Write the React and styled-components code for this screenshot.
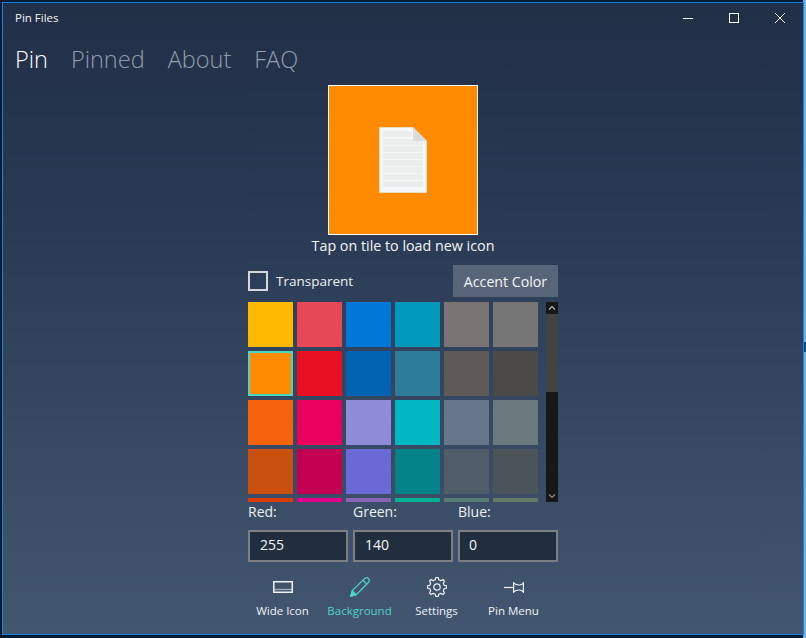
import React from "react";
import styled, { createGlobalStyle } from "styled-components";

const Global = createGlobalStyle`
  html, body { margin: 0; padding: 0; width: 806px; height: 638px; overflow: hidden; }
  body { font-family: "Open Sans", "Noto Sans", "Liberation Sans", sans-serif; }
  * { box-sizing: border-box; }
`;

const Desktop = styled.div`
  width: 806px;
  height: 638px;
  padding: 2px;
  background:
    linear-gradient(#0b4f8a, #0b4f8a) right 342px / 3px 10px no-repeat,
    linear-gradient(#6fb2e2, #6fb2e2) right top / 3px 638px no-repeat,
    #071c33;
`;

const Window = styled.div`
  width: 802px;
  height: 633px;
  border: 1px solid #1683de;
  background: linear-gradient(180deg, #212f47 0%, #2a3a54 35%, #435670 100%);
  color: #fff;
  display: flex;
  flex-direction: column;
`;

const TitleBar = styled.div`
  height: 29px;
  flex: none;
  display: flex;
  align-items: center;
  justify-content: space-between;
  padding-left: 12px;
`;

const Title = styled.span`
  font-size: 11.5px;
  color: #f2f4f6;
`;

const WinControls = styled.div`
  display: flex;
  height: 29px;
`;

const WinButton = styled.div`
  width: 46px;
  height: 29px;
  display: flex;
  align-items: center;
  justify-content: center;
`;

const Tabs = styled.nav`
  display: flex;
  gap: 23px;
  padding: 0 0 0 12px;
  height: 53px;
  flex: none;
  align-items: center;
`;

const Tab = styled.span`
  font-size: 23.5px;
  font-weight: 300;
  color: ${(p) => (p.$active ? "#ffffff" : "#939cab")};
`;

const Content = styled.main`
  width: 310px;
  align-self: center;
  display: flex;
  flex-direction: column;
  align-items: center;
`;

const Tile = styled.div`
  width: 150px;
  height: 150px;
  background: #ff8c00;
  border: 1px solid #fff;
  display: flex;
  align-items: center;
  justify-content: center;
`;

const Caption = styled.div`
  font-size: 14.3px;
  line-height: 20px;
  margin-top: 1px;
  color: #f4f6f8;
  white-space: nowrap;
`;

const OptionRow = styled.div`
  width: 100%;
  height: 32px;
  margin-top: 9px;
  display: flex;
  align-items: center;
  justify-content: space-between;
`;

const CheckLabel = styled.label`
  display: flex;
  align-items: center;
  gap: 8px;
  font-size: 13.5px;
  line-height: 18px;
  color: #eef0f3;
`;

const CheckBox = styled.span`
  width: 20px;
  height: 20px;
  border: 2px solid #d3d6db;
  display: block;
`;

const AccentButton = styled.div`
  width: 105px;
  height: 32px;
  background: #586578;
  color: #f4f6f8;
  font-size: 14.2px;
  display: flex;
  align-items: center;
  justify-content: center;
`;

const PaletteRow = styled.div`
  width: 100%;
  height: 200px;
  margin-top: 5px;
  display: flex;
  justify-content: space-between;
`;

const Palette = styled.div`
  width: 294px;
  height: 200px;
  overflow: hidden;
  display: grid;
  grid-template-columns: repeat(6, 45px);
  grid-auto-rows: 45px;
  gap: 4px;
`;

const Swatch = styled.div`
  background: ${(p) => p.$color};
  border: ${(p) => (p.$selected ? "2px solid #4fd3c4" : "none")};
`;

const ScrollBar = styled.div`
  width: 12px;
  height: 200px;
  background: #171717;
  display: flex;
  flex-direction: column;
`;

const ScrollArrow = styled.div`
  width: 12px;
  height: 12px;
  flex: none;
  display: flex;
  align-items: center;
  justify-content: center;
`;

const ScrollThumb = styled.div`
  width: 12px;
  height: 78px;
  flex: none;
  background: #434343;
`;

const ScrollSpacer = styled.div`
  flex: 1;
`;

const FieldGrid = styled.div`
  width: 100%;
  display: grid;
  grid-template-columns: repeat(3, 100px);
  column-gap: 5px;
`;

const FieldLabel = styled.div`
  font-size: 14px;
  line-height: 20px;
  height: 28px;
  color: #eef0f3;
`;

const Field = styled.div`
  height: 32px;
  border: 2px solid #7d7f82;
  background: #212e3e;
  color: #f4f6f8;
  font-size: 14px;
  line-height: 18px;
  padding: 0 0 2px ${(p) => p.$pad || 10}px;
  display: flex;
  align-items: center;
`;

const CommandBar = styled.div`
  width: 100%;
  margin-top: 13px;
  margin-left: -8px;
  display: flex;
`;

const Command = styled.div`
  width: 77px;
  height: 48px;
  display: flex;
  flex-direction: column;
  align-items: center;
  color: ${(p) => (p.$active ? "#4fd3c4" : "#f0f2f5")};
`;

const CommandIcon = styled.div`
  height: 24px;
  display: flex;
  align-items: center;
  justify-content: center;
`;

const CommandLabel = styled.span`
  font-size: 11.5px;
  line-height: 16px;
  margin-top: 4px;
  white-space: nowrap;
`;

const colors = [
  "#FFB900", "#E74856", "#0078D7", "#0099BC", "#7A7574", "#767676",
  "#FF8C00", "#E81123", "#0063B1", "#2D7D9A", "#5D5A58", "#4C4A48",
  "#F7630C", "#EA005E", "#8E8CD8", "#00B7C3", "#68768A", "#69797E",
  "#CA5010", "#C30052", "#6B69D6", "#038387", "#515C6B", "#4A5459",
  "#DA3B01", "#E3008C", "#8764B8", "#00B294", "#567C73", "#647C64",
];

const DocIcon = () => (
  <svg width="48" height="66" viewBox="0 0 48 66">
    <path d="M0.5 0.5H34L47.5 14V65.5H0.5Z" fill="#f6f7f9" stroke="#e9dcc8" />
    {[4, 12, 19, 26, 33, 40, 47, 54].map((y) => (
      <rect key={y} x="4" y={y} width={y < 12 ? 29 : 40} height="6" fill="#eceded" />
    ))}
    <path d="M34 0.5V14H47.5Z" fill="#dcdcdd" />
  </svg>
);

const WideIcon = () => (
  <svg width="20" height="12" viewBox="0 0 20 12" fill="none" stroke="currentColor">
    <rect x="0.75" y="0.75" width="18.5" height="10.5" strokeWidth="1.5" />
    <path d="M1 8.5H19" strokeWidth="1.4" opacity="0.55" />
  </svg>
);

const PencilIcon = () => (
  <svg width="20" height="20" viewBox="0 0 20 20" fill="none" stroke="currentColor" strokeWidth="1.3">
    <path d="M0.8 19.2L2.3 13.6L14.8 1.4C15.8 0.5 17.2 0.5 18.4 1.6C19.6 2.8 19.6 4.2 18.6 5.2L6.3 17.7Z" />
    <path d="M2.3 13.6L6.3 17.7M13 3.2L16.8 7" />
    <path d="M0.8 19.2L2 15.2L4.8 18Z" fill="currentColor" />
  </svg>
);

const gearPoints = (() => {
  const pts = [];
  const teeth = 8;
  for (let i = 0; i < teeth; i++) {
    const a = (i * 2 * Math.PI) / teeth - Math.PI / 2;
    const step = (2 * Math.PI) / teeth;
    [
      [7.4, -0.5],
      [9.6, -0.24],
      [9.6, 0.24],
      [7.4, 0.5],
    ].forEach(([r, f]) => {
      const t = a + f * step * 0.62;
      pts.push(`${(10 + r * Math.cos(t)).toFixed(2)},${(10 + r * Math.sin(t)).toFixed(2)}`);
    });
  }
  return pts.join(" ");
})();

const GearIcon = () => (
  <svg width="20" height="20" viewBox="0 0 20 20" fill="none" stroke="currentColor" strokeWidth="1.2" strokeLinejoin="round">
    <polygon points={gearPoints} />
    <circle cx="10" cy="10" r="3.2" />
  </svg>
);

const PinIcon = () => (
  <svg width="20" height="11" viewBox="0 0 20 11" fill="none" stroke="currentColor" strokeWidth="1.2">
    <path d="M0 5.5H9" />
    <path d="M9.6 0.8V10.2C11 8.6 13 8 15 8H15.5C17 8 18.5 9 19.4 10.2V0.8C18.5 2 17 3 15.5 3H15C13 3 11 2.4 9.6 0.8Z" />
  </svg>
);

const commands = [
  { label: "Wide Icon", icon: <WideIcon /> },
  { label: "Background", icon: <PencilIcon />, active: true },
  { label: "Settings", icon: <GearIcon /> },
  { label: "Pin Menu", icon: <PinIcon /> },
];

export default function App() {
  return (
    <Desktop>
      <Global />
      <Window>
        <TitleBar>
          <Title>Pin Files</Title>
          <WinControls>
            <WinButton>
              <svg width="10" height="10" viewBox="0 0 10 10"><path d="M0 5.5H10" stroke="#fff" /></svg>
            </WinButton>
            <WinButton>
              <svg width="10" height="10" viewBox="0 0 10 10"><rect x="0.5" y="0.5" width="9" height="9" fill="none" stroke="#fff" /></svg>
            </WinButton>
            <WinButton>
              <svg width="10" height="10" viewBox="0 0 10 10"><path d="M0 0L10 10M10 0L0 10" stroke="#fff" /></svg>
            </WinButton>
          </WinControls>
        </TitleBar>
        <Tabs>
          <Tab $active>Pin</Tab>
          <Tab>Pinned</Tab>
          <Tab>About</Tab>
          <Tab>FAQ</Tab>
        </Tabs>
        <Content>
          <Tile><DocIcon /></Tile>
          <Caption>Tap on tile to load new icon</Caption>
          <OptionRow>
            <CheckLabel><CheckBox />Transparent</CheckLabel>
            <AccentButton>Accent Color</AccentButton>
          </OptionRow>
          <PaletteRow>
            <Palette>
              {colors.map((c, i) => (
                <Swatch key={c} $color={c} $selected={i === 6} />
              ))}
            </Palette>
            <ScrollBar>
              <ScrollArrow>
                <svg width="8" height="6" viewBox="0 0 8 6"><path d="M1 4.5L4 1.5L7 4.5" fill="none" stroke="#b5b5b5" strokeWidth="1.2" /></svg>
              </ScrollArrow>
              <ScrollThumb />
              <ScrollSpacer />
              <ScrollArrow>
                <svg width="8" height="6" viewBox="0 0 8 6"><path d="M1 1.5L4 4.5L7 1.5" fill="none" stroke="#8a8a8a" strokeWidth="1.2" /></svg>
              </ScrollArrow>
            </ScrollBar>
          </PaletteRow>
          <FieldGrid>
            <FieldLabel>Red:</FieldLabel>
            <FieldLabel>Green:</FieldLabel>
            <FieldLabel>Blue:</FieldLabel>
            <Field>255</Field>
            <Field>140</Field>
            <Field $pad={9}>0</Field>
          </FieldGrid>
          <CommandBar>
            {commands.map((c) => (
              <Command key={c.label} $active={c.active}>
                <CommandIcon>{c.icon}</CommandIcon>
                <CommandLabel>{c.label}</CommandLabel>
              </Command>
            ))}
          </CommandBar>
        </Content>
      </Window>
    </Desktop>
  );
}
